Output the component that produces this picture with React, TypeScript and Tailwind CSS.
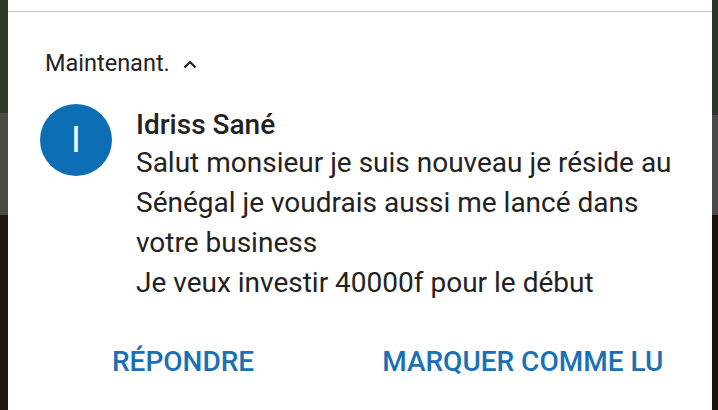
export default function App() {
  const lines = [
    "Salut monsieur je suis nouveau je réside au",
    "Sénégal je voudrais aussi me lancé dans",
    "votre business",
    "Je veux investir 40000f pour le début",
  ];

  return (
    <div className="flex h-[410px] w-[718px] overflow-hidden bg-white" style={{ fontFamily: "Roboto, 'Noto Sans', sans-serif" }}>
      {/* left edge of the wallpaper */}
      <div className="flex w-[8px] flex-col">
        <div className="h-[113px] bg-[#2f3a27]" />
        <div className="h-[102px] bg-[#4a4a47]" />
        <div className="flex-1 bg-[#1f1512]" />
      </div>

      <div className="flex flex-1 flex-col bg-white">
        <div className="h-[12px] border-b border-[#c4c4c4]" />

        <div className="flex items-center gap-[12px] pl-[37px] pt-[37px] text-[23.5px] leading-[28px] text-[#222]">
          <span>Maintenant.</span>
          <svg width="16" height="12" viewBox="0 0 16 12" className="mt-[1px]">
            <path d="M2.5 9.5 L8 4 L13.5 9.5" fill="none" stroke="#222" strokeWidth="2.2" />
          </svg>
        </div>

        <div className="flex pl-[32px] pt-[27px]">
          <div className="flex h-[72px] w-[72px] shrink-0 items-center justify-center rounded-full bg-[#0d6db5] text-[36px] font-normal text-white">
            I
          </div>
          <div className="ml-[24px] mt-[3px] flex flex-col">
            <div className="text-[28px] font-medium leading-[36px] text-[#222]">Idriss Sané</div>
            <div className="text-[28px] leading-[40px] text-[#222]">
              {lines.map((l) => (
                <div key={l}>{l}</div>
              ))}
            </div>
          </div>
        </div>

        <div className="mt-[43px] flex items-center pl-[104px] text-[28px] font-medium leading-[32px] text-[#1a70b5]">
          <span>RÉPONDRE</span>
          <span className="ml-[128px]">MARQUER COMME LU</span>
        </div>
      </div>

      <div className="flex w-[6px] flex-col">
        <div className="h-[115px] bg-[#2d362c]" />
        <div className="h-[100px] bg-[#4a4a4a]" />
        <div className="flex-1 bg-[#1a120e]" />
      </div>
    </div>
  );
}
